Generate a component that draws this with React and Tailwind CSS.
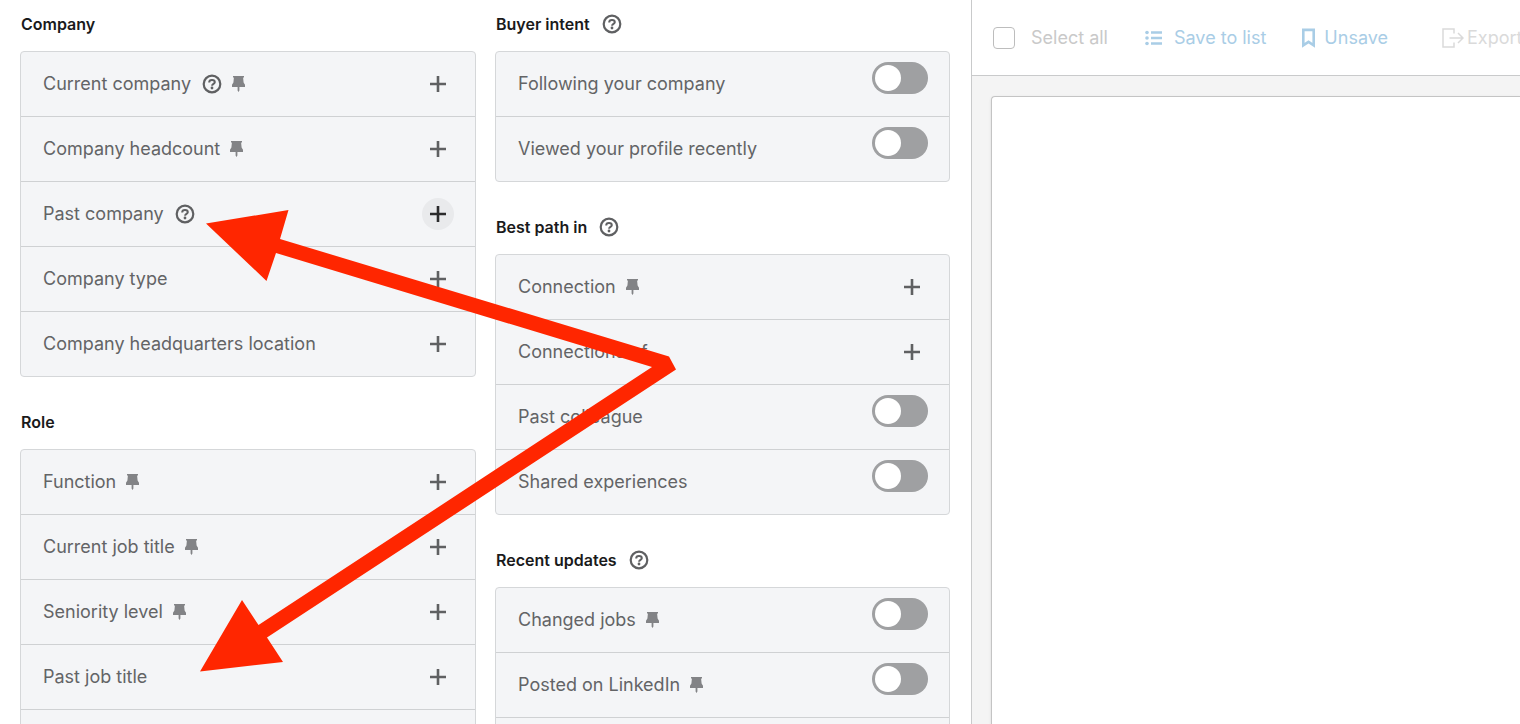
const FONT = "font-['Inter','Liberation_Sans',sans-serif]";

const COMPANY = [
  { label: 'Current company', help: true, pin: true },
  { label: 'Company headcount', pin: true },
  { label: 'Past company', help: true, active: true },
  { label: 'Company type' },
  { label: 'Company headquarters location' },
];
const ROLE = [
  { label: 'Function', pin: true },
  { label: 'Current job title', pin: true },
  { label: 'Seniority level', pin: true },
  { label: 'Past job title' },
];
const INTENT = [
  { label: 'Following your company', toggle: true },
  { label: 'Viewed your profile recently', toggle: true },
];
const PATH_IN = [
  { label: 'Connection', pin: true },
  { label: 'Connections of' },
  { label: 'Past colleague', toggle: true },
  { label: 'Shared experiences', toggle: true },
];
const UPDATES = [
  { label: 'Changed jobs', pin: true, toggle: true },
  { label: 'Posted on LinkedIn', pin: true, toggle: true },
];

function HelpIcon() {
  return (
    <svg className="size-5 shrink-0 text-[#5f6062]" viewBox="0 0 20 20" fill="none" stroke="currentColor" aria-hidden="true">
      <circle cx="10" cy="10" r="8.3" strokeWidth="2.2" />
      <path d="M7.2 8.4C7.200 6.800 8.300 6 10 6s2.800.8 2.800 2.200c0 1.700-2.700 1.600-2.700 3.500" strokeWidth="2" />
      <circle cx="10" cy="14" r="1.4" fill="currentColor" stroke="none" />
    </svg>
  );
}

function PinIcon() {
  return (
    <svg className="h-4 w-[13px] shrink-0 text-[#828386]" viewBox="0 0 13 16" fill="currentColor" aria-hidden="true">
      <path d="M1 0h11v1.500h-.9l.5 4.900L13 8.700V11H7.400v3.600L6.500 16l-.9-1.400V11H0V8.700l1.400-2.300.5-4.900H1z" />
    </svg>
  );
}

function PlusButton({ label, active }) {
  return (
    <button
      type="button"
      aria-label={`Add ${label}`}
      className={`flex size-8 shrink-0 items-center justify-center rounded-full ${active ? 'bg-[#e9eaec] text-[#2b2b2c]' : 'text-[#5f6062]'}`}
    >
      <svg className="size-4" viewBox="0 0 16 16" stroke="currentColor" strokeWidth="2.6" aria-hidden="true">
        <path d="M8 0v16M0 8h16" />
      </svg>
    </button>
  );
}

function Toggle({ label }) {
  return (
    <label className="mt-2.5 flex h-8 w-14 shrink-0 cursor-pointer items-center self-start rounded-full bg-[#9fa0a2] px-[3px] has-checked:justify-end">
      <input type="checkbox" role="switch" aria-label={label} className="peer sr-only" />
      <span className="size-[26px] rounded-full bg-white" />
    </label>
  );
}

function Row({ label, help, pin, toggle, active }) {
  return (
    <li className="flex h-[65px] items-center gap-2.5 pr-[21px] pl-[22px] last:h-16">
      <span className="flex items-center gap-[11px] text-lg text-[#636466]">
        {label}
        {help && <HelpIcon />}
      </span>
      {pin && <PinIcon />}
      <span className="grow" />
      {toggle ? <Toggle label={label} /> : <PlusButton label={label} active={active} />}
    </li>
  );
}

function Section({ title, help, rows, more }) {
  return (
    <section>
      <h2 className="mb-[15px] flex h-6 items-center gap-3 pl-px text-base font-semibold text-[#1a1a1b]">
        {title}
        {help && <HelpIcon />}
      </h2>
      <ul className="divide-y divide-[#cfd1d3] rounded-[4px] border border-[#d5d7d9] bg-[#f4f5f7]">
        {rows.map((row) => (
          <Row key={row.label} {...row} />
        ))}
        {more && <li className="h-16" />}
      </ul>
    </section>
  );
}

function Toolbar() {
  return (
    <header className="flex h-[76px] shrink-0 items-center overflow-hidden border-b border-[#c9cacb] bg-white pl-[21px] text-lg whitespace-nowrap text-[#a9cde6]">
      <label className="flex shrink-0 items-center gap-4 text-[#c9c9c9]">
        <input type="checkbox" className="size-[22px] appearance-none rounded-[4px] border border-[#bdbdbd] bg-white checked:bg-[#a9cde6]" />
        Select all
      </label>
      <button type="button" className="ml-[37px] flex shrink-0 items-center gap-[11px]">
        <svg className="h-4 w-[18px]" viewBox="0 0 18 16" fill="currentColor" aria-hidden="true">
          <circle cx="2" cy="2.5" r="1.8" />
          <circle cx="2" cy="8" r="1.8" />
          <circle cx="2" cy="13.5" r="1.8" />
          <path d="M6 1.3h11v2.400H6zM6 6.800h11v2.400H6zM6 12.300h11v2.400H6z" />
        </svg>
        Save to list
      </button>
      <button type="button" className="ml-[35px] flex shrink-0 items-center gap-2">
        <svg className="h-5 w-[15px]" viewBox="0 0 15 20" fill="none" stroke="currentColor" strokeWidth="2.6" aria-hidden="true">
          <path d="M2.3 1.900h10.400v15.400L7.500 13.800l-5.200 3.500z" />
        </svg>
        Unsave
      </button>
      <button type="button" className="ml-[54px] flex shrink-0 items-center gap-[3px] text-[#dadada]">
        <svg className="h-5 w-[22px]" viewBox="0 0 22 20" fill="none" stroke="currentColor" strokeWidth="1.5" aria-hidden="true">
          <path d="M12 5.500V1H1v18h11v-4.500M7.500 10h13M16 5l5 5-5 5" />
        </svg>
        Export
      </button>
    </header>
  );
}

function Arrows() {
  return (
    <svg className="pointer-events-none absolute top-0 left-0" width="700" height="700" viewBox="0 0 700 700" fill="#ff2600" aria-hidden="true">
      <path d="M206 223.500L288.500 210 280 239 669 356.500 676 369.500 267 637.500 283 662 200 671.500 242 600 258.500 625 652 367 276 253 266.500 281z" />
    </svg>
  );
}

export default function App() {
  return (
    <div className={`relative grid h-screen grid-cols-[972fr_548fr] overflow-hidden bg-white ${FONT}`}>
      <main className="grid grid-cols-[456fr_455fr] content-start gap-[19px] overflow-hidden border-r border-[#c9cacb] pt-3 pr-[21px] pl-5">
        <div className="flex flex-col gap-[33px]">
          <Section title="Company" rows={COMPANY} />
          <Section title="Role" rows={ROLE} more />
        </div>
        <div className="flex flex-col gap-[33px]">
          <Section title="Buyer intent" help rows={INTENT} />
          <Section title="Best path in" help rows={PATH_IN} />
          <Section title="Recent updates" help rows={UPDATES} more />
        </div>
      </main>
      <aside className="flex min-w-0 flex-col overflow-hidden bg-[#f4f4f4]">
        <Toolbar />
        <div className="mt-5 ml-[19px] grow rounded-tl-[4px] border-t border-l border-[#c4c4c4] bg-white shadow" />
      </aside>
      <Arrows />
    </div>
  );
}
